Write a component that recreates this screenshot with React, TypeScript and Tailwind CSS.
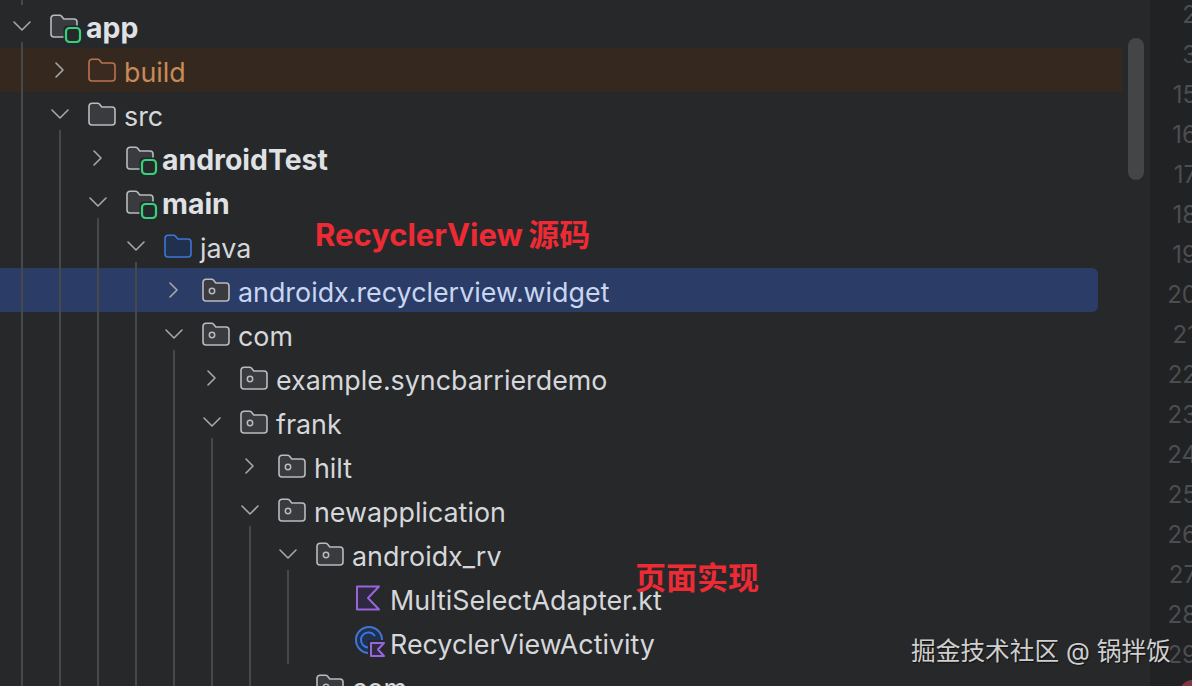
import type { ReactNode } from "react";

type IconKind = "module" | "folder" | "build" | "source" | "package" | "kotlin" | "activity";

type TreeNode = {
  name: string;
  icon: IconKind;
  open?: boolean;
  closed?: boolean;
  bold?: boolean;
  tone?: "build" | "selected";
  children?: TreeNode[];
};

const TREE: TreeNode = {
  name: "app",
  icon: "module",
  bold: true,
  open: true,
  children: [
    { name: "build", icon: "build", closed: true, tone: "build" },
    {
      name: "src",
      icon: "folder",
      open: true,
      children: [
        { name: "androidTest", icon: "module", bold: true, closed: true },
        {
          name: "main",
          icon: "module",
          bold: true,
          open: true,
          children: [
            {
              name: "java",
              icon: "source",
              open: true,
              children: [
                { name: "androidx.recyclerview.widget", icon: "package", closed: true, tone: "selected" },
                {
                  name: "com",
                  icon: "package",
                  open: true,
                  children: [
                    { name: "example.syncbarrierdemo", icon: "package", closed: true },
                    {
                      name: "frank",
                      icon: "package",
                      open: true,
                      children: [
                        { name: "hilt", icon: "package", closed: true },
                        {
                          name: "newapplication",
                          icon: "package",
                          open: true,
                          children: [
                            {
                              name: "androidx_rv",
                              icon: "package",
                              open: true,
                              children: [
                                { name: "MultiSelectAdapter.kt", icon: "kotlin" },
                                { name: "RecyclerViewActivity", icon: "activity" },
                              ],
                            },
                            // cut off by the bottom edge, only the top of it shows
                            { name: "com", icon: "package" },
                          ],
                        },
                      ],
                    },
                  ],
                },
              ],
            },
          ],
        },
      ],
    },
  ],
};

const LINE_NUMBERS = [2, 3, 15, 16, 17, 18, 19, 20, 21, 22, 23, 24, 25, 26, 27, 28, 29];

const FOLDER_PATH =
  "M1 4.2a3 3 0 0 1 3-3h5.6a2.4 2.4 0 0 1 1.8.8l2.4 3h10.2a3 3 0 0 1 3 3V20a3 3 0 0 1-3 3H4a3 3 0 0 1-3-3Z";

function Folder({ stroke, fill, children }: { stroke: string; fill: string; children?: ReactNode }) {
  return (
    <svg width="32" height="28" viewBox="0 0 32 28" fill="none" className="shrink-0 overflow-visible">
      <path d={FOLDER_PATH} transform="translate(0 2)" fill={fill} stroke={stroke} strokeWidth="1.6" />
      {children}
    </svg>
  );
}

function TreeIcon({ kind }: { kind: IconKind }) {
  if (kind === "build") return <Folder stroke="#bd7350" fill="#3a2a1f" />;
  if (kind === "folder") return <Folder stroke="#b9bbbf" fill="#393b3f" />;
  if (kind === "source") return <Folder stroke="#3f74d8" fill="#20304f" />;
  if (kind === "package") {
    return (
      <Folder stroke="#b9bbbf" fill="#393b3f">
        <circle cx="10" cy="15" r="2.7" stroke="#b9bbbf" strokeWidth="1.5" />
      </Folder>
    );
  }
  if (kind === "module") {
    return (
      <Folder stroke="#b9bbbf" fill="#393b3f">
        <rect x="13.5" y="13.5" width="19" height="19" rx="4" fill="#27282a" />
        <rect x="16" y="16" width="14" height="14" rx="3.5" fill="#27282a" stroke="#34d27b" strokeWidth="2.2" />
      </Folder>
    );
  }
  if (kind === "kotlin") {
    return (
      <svg width="32" height="28" viewBox="0 0 32 28" fill="none" className="shrink-0">
        <path d="M3 2.5h22L14 14l11 11.5H3Z" fill="#2e2840" stroke="#9866dc" strokeWidth="2" strokeLinejoin="round" />
      </svg>
    );
  }
  return (
    <svg width="32" height="30" viewBox="0 0 32 30" fill="none" className="shrink-0 overflow-visible">
      <circle cx="15" cy="13" r="13" fill="#20304f" stroke="#3f74d8" strokeWidth="2" />
      <path d="M20.5 8.5a7.5 7.5 0 1 0-1 10" stroke="#3f74d8" strokeWidth="2" strokeLinecap="round" />
      <rect x="14" y="13" width="18" height="18" fill="#27282a" />
      <path d="M17 16h13l-6 6.5 6 6.5H17Z" fill="#2e2840" stroke="#9866dc" strokeWidth="2" strokeLinejoin="round" />
    </svg>
  );
}

function Chevron({ open }: { open?: boolean }) {
  return (
    <svg width="16" height="16" viewBox="0 0 16 16" fill="none" className="shrink-0 overflow-visible">
      <path
        d={open ? "M0 4l8 8 8-8" : "M4 1l7 7-7 7"}
        stroke="#a6a8ac"
        strokeWidth="1.6"
        strokeLinecap="round"
        strokeLinejoin="round"
      />
    </svg>
  );
}

function labelColor(node: TreeNode) {
  if (node.tone === "build") return "text-[#c88a58]";
  if (node.tone === "selected") return "text-[#c8d6f2]";
  return node.bold ? "text-[#dfe1e5]" : "text-[#d5d7db]";
}

function Row({ node, depth }: { node: TreeNode; depth: number }) {
  const hasChevron = node.open || node.closed;
  return (
    <div
      style={{ paddingLeft: 14 + depth * 38 }}
      className={
        "relative flex h-11 items-center " +
        (node.tone === "build" ? "mr-[28px] bg-[#35291f] " : "") +
        (node.tone === "selected" ? "mr-[52px] rounded-r-md bg-[#2b3d67] " : "")
      }
    >
      <div className="mr-[20px] w-4 shrink-0">{hasChevron && <Chevron open={node.open} />}</div>
      <TreeIcon kind={node.icon} />
      <span
        className={
          "ml-1 whitespace-nowrap pt-1 leading-none " +
          (node.bold ? "text-[28.4px] font-bold " : "text-[26.85px] ") +
          labelColor(node)
        }
      >
        {node.name}
      </span>
    </div>
  );
}

function Branch({ node, depth }: { node: TreeNode; depth: number }) {
  return (
    <div>
      <Row node={node} depth={depth} />
      {node.children && (
        <div className="relative">
          <div style={{ left: 21 + depth * 38 }} className="absolute -top-1.5 bottom-0 z-10 w-0.5 bg-[#47484b]" />
          {node.children.map((child) => (
            <Branch key={child.name} node={child} depth={depth + 1} />
          ))}
        </div>
      )}
    </div>
  );
}

export default function App() {
  return (
    <div className="relative flex h-[686px] w-[1192px] overflow-hidden bg-[#27282a] font-['Inter','Noto_Sans_CJK_SC',sans-serif]">
      <div className="relative w-[1150px] shrink-0 pt-1">
        <div className="absolute left-[21px] top-0 h-[5px] w-0.5 bg-[#47484b]" />
        <Branch node={TREE} depth={0} />
        <div className="absolute left-[1128px] top-[38px] h-[142px] w-4 rounded-full bg-[#444547]" />
      </div>

      <div className="relative w-[42px] shrink-0 overflow-hidden bg-[#212224]">
        <div className="-mt-[5px] ml-[-17px] w-[64px] text-right text-2xl text-[#4c4d50]">
          {LINE_NUMBERS.map((n) => (
            <div key={n} className="h-10 leading-10">
              {n}
            </div>
          ))}
        </div>
        <div className="absolute left-[30px] top-[680px] h-6 w-6 rounded-full bg-[#7d3a3e]" />
      </div>

      <span className="absolute left-[315px] top-[216px] whitespace-nowrap text-[31px] font-bold leading-[38px] text-[#ee2a35] [word-spacing:-2px]">
        RecyclerView 源码
      </span>
      <span className="absolute left-[635px] top-[559px] whitespace-nowrap text-[31px] font-bold leading-[38px] text-[#ee2a35]">
        页面实现
      </span>
      <span className="absolute left-[911px] top-[636px] whitespace-nowrap text-[24.7px] leading-[30px] text-[#cfcfcf] [text-shadow:1px_1px_1px_#111]">
        掘金技术社区 @ 锅拌饭
      </span>
    </div>
  );
}
